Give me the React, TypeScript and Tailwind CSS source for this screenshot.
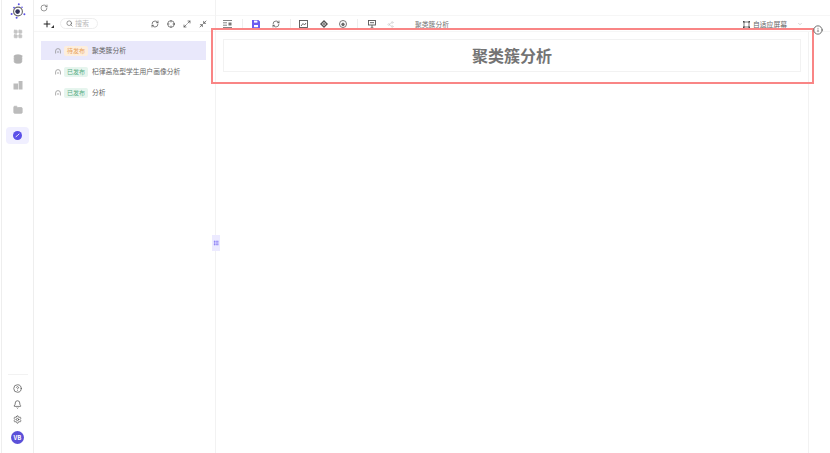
import { RotateCw, Plus, Search, Crosshair, Maximize2, Minimize2, ChevronDown, Info, CircleHelp, Bell, Settings, LayoutGrid, Database, Folder, RefreshCw, Share2, Grip } from 'lucide-react';

const F = "font-['Noto_Sans_CJK_SC','Noto_Sans',sans-serif]";

const reports = [
  { status: '待发布', name: '聚类簇分析', active: true },
  { status: '已发布', name: '杞律高危型学生用户画像分析', active: false },
  { status: '已发布', name: '分析', active: false },
];

const Logo = () => (
  <svg width="16" height="16" viewBox="0 0 16 16">
    <circle cx="8" cy="8.5" r="4.4" fill="none" stroke="#666" strokeWidth="1.1" />
    <circle cx="7.6" cy="8.6" r="2.3" fill="#33335c" />
    <circle cx="8.8" cy="1.2" r="1" fill="#5b50e8" />
    <circle cx="1.6" cy="11" r="1" fill="#5b50e8" />
    <circle cx="14.4" cy="11.2" r="1" fill="#5b50e8" />
    <circle cx="4" cy="4.6" r="0.9" fill="#5b50e8" />
    <circle cx="6.6" cy="14.8" r="1" fill="#5b50e8" />
    <circle cx="12" cy="4.2" r="0.8" fill="#5b50e8" />
  </svg>
);

const ChartIcon = () => (
  <svg width="10" height="10" viewBox="0 0 10 10" fill="#bcbcbc">
    <rect x="0.5" y="3.5" width="4.5" height="6" />
    <rect x="5.6" y="1" width="3.9" height="8.5" />
  </svg>
);

const ActiveIcon = () => (
  <svg width="9" height="9" viewBox="0 0 10 10">
    <circle cx="5" cy="5" r="5" fill="#5b50e8" />
    <path d="M3 6.5 L5 5 L7 3" fill="none" stroke="#fff" strokeWidth="1" />
  </svg>
);

const Arch = () => (
  <svg width="6" height="6" viewBox="0 0 6 6" fill="none" stroke="#888" strokeWidth="0.7">
    <path d="M0.6 5.5 V3 A2.4 2.4 0 0 1 5.4 3 V5.5" />
    <path d="M3 3 V5" />
  </svg>
);

const Sidebar = () => (
  <aside className="ml-px flex h-full w-[33px] shrink-0 flex-col items-center border-x border-[#eeeeee] pt-[3px] pb-[9px]">
    <Logo />
    <div className="mt-[7px] flex flex-col items-center gap-[10.5px]">
      <div className="flex h-[15px] items-center"><LayoutGrid size={10} fill="#c4c4c4" stroke="#c4c4c4" /></div>
      <div className="flex h-[15px] items-center"><Database size={10} fill="#b5b5b5" stroke="#b5b5b5" /></div>
      <div className="flex h-[15px] items-center"><ChartIcon /></div>
      <div className="flex h-[15px] items-center"><Folder size={10} fill="#bcbcbc" stroke="#bcbcbc" /></div>
    </div>
    <div className="mt-[9px] flex h-[17px] w-[23px] items-center justify-center rounded bg-[#f0efff]">
      <ActiveIcon />
    </div>
    <div className="mt-auto flex w-[20px] flex-col items-center border-t border-[#f2f2f2] pt-[9px]">
      <CircleHelp size={9} stroke="#555" />
      <Bell size={9} stroke="#555" className="mt-[7px]" />
      <Settings size={9} stroke="#555" className="mt-[6px]" />
      <div className="mt-[7px] flex h-[13px] w-[13px] items-center justify-center rounded-full bg-[#5b50d8] text-[6px] font-bold text-white">VB</div>
    </div>
  </aside>
);

const ReportList = () => (
  <section className="flex w-[182px] shrink-0 flex-col border-r border-[#f2f2f2]">
    <div className="flex h-[16px] items-center border-b border-[#f6f6f6] pl-[6px]">
      <RotateCw size={8} stroke="#666" />
    </div>
    <div className="flex h-[16px] items-center border-b border-[#f6f6f6] pl-[8px] pr-[8px]">
      <div className="relative">
        <Plus size={10} stroke="#222" strokeWidth={2.4} />
        <div className="absolute left-[9px] top-[6px] h-0 w-0 border-b-[3px] border-l-[3px] border-b-[#333] border-l-transparent" />
      </div>
      <div className="ml-[8px] flex h-[11px] w-[38px] items-center gap-[2px] rounded-full border border-[#eeeeee] pl-[5px]">
        <Search size={7} stroke="#555" />
        <span className="text-[7px] leading-none text-[#bbbbbb]">搜索</span>
      </div>
      <div className="ml-auto flex items-center gap-[8px]">
        <RefreshCw size={8} stroke="#444" />
        <Crosshair size={8} stroke="#444" />
        <Maximize2 size={8} stroke="#444" />
        <Minimize2 size={8} stroke="#444" />
      </div>
    </div>
    <ul className="mt-[9px] flex flex-col gap-[2px] pl-[7px] pr-[9px]">
      {reports.map((r) => (
        <li key={r.name} className={`flex h-[19px] items-center pl-[14px] ${r.active ? 'bg-[#e9e8fb]' : ''}`}>
          <Arch />
          <span className={`ml-[3px] flex h-[10px] w-[24px] items-center justify-center rounded-[2px] text-[6px] leading-none ${r.active ? 'bg-[#fdeedd] text-[#e8a35c]' : 'bg-[#e6f5ee] text-[#5aae85]'}`}>{r.status}</span>
          <span className="ml-[4px] text-[6.8px] leading-none text-[#666666]">{r.name}</span>
        </li>
      ))}
    </ul>
  </section>
);

const Divider = () => <div className="h-[10px] w-px bg-[#eeeeee]" />;

const IndentIcon = () => (
  <svg width="9" height="8" viewBox="0 0 9 8" fill="none" stroke="#777" strokeWidth="0.9">
    <path d="M0 0.5 H9 M0 7.5 H9 M0 2.8 H4 M0 5.2 H4" />
    <rect x="5.5" y="2.5" width="3" height="3" fill="#777" stroke="none" />
  </svg>
);

const SaveIcon = () => (
  <svg width="8" height="8" viewBox="0 0 8 8">
    <path d="M0 0 H6.4 L8 1.6 V8 H0 Z" fill="#6a5cf0" />
    <rect x="2" y="0.6" width="3.4" height="2" fill="#fff" />
    <rect x="2" y="5" width="4" height="2.2" fill="#fff" />
  </svg>
);

const PictureIcon = () => (
  <svg width="9" height="8" viewBox="0 0 9 8" fill="none" stroke="#555" strokeWidth="0.9">
    <rect x="0.5" y="0.5" width="8" height="7" />
    <path d="M2 6 L4 3.5 L5.5 5 L7 3" />
  </svg>
);

const ClusterIcon = () => (
  <svg width="8" height="8" viewBox="0 0 8 8" fill="#555">
    <path d="M4 0 L8 4 L4 8 L0 4 Z" />
    <path d="M4 2 L6 4 L4 6 L2 4 Z" fill="#fff" />
    <circle cx="4" cy="4" r="0.9" />
  </svg>
);

const DialIcon = () => (
  <svg width="8" height="8" viewBox="0 0 8 8" fill="none" stroke="#666" strokeWidth="0.9">
    <circle cx="4" cy="4" r="3.5" />
    <circle cx="4" cy="4.4" r="1.3" fill="#666" />
  </svg>
);

const BoardIcon = () => (
  <svg width="8" height="8" viewBox="0 0 8 8" fill="none" stroke="#555" strokeWidth="0.9">
    <rect x="0.5" y="0.5" width="7" height="4.5" />
    <path d="M4 5 V8 M2.5 8 H5.5" />
    <path d="M2 2.7 H6" />
  </svg>
);

const FitIcon = () => (
  <svg width="7" height="7" viewBox="0 0 7 7" fill="none" stroke="#444" strokeWidth="0.7">
    <rect x="1" y="1" width="5" height="5" />
    <rect x="0" y="0" width="1.5" height="1.5" fill="#444" stroke="none" />
    <rect x="5.5" y="0" width="1.5" height="1.5" fill="#444" stroke="none" />
    <rect x="0" y="5.5" width="1.5" height="1.5" fill="#444" stroke="none" />
    <rect x="5.5" y="5.5" width="1.5" height="1.5" fill="#444" stroke="none" />
  </svg>
);

const Toolbar = () => (
  <div className="flex h-[16px] items-center border-b border-[#f6f6f6] pt-px pl-[7px] pr-[27px]">
    <IndentIcon />
    <div className="ml-[10px]"><Divider /></div>
    <div className="ml-[9px]"><SaveIcon /></div>
    <RefreshCw size={8} stroke="#444" className="ml-[11.5px]" />
    <div className="ml-[10px]"><Divider /></div>
    <div className="ml-[8.5px]"><PictureIcon /></div>
    <div className="ml-[11.5px]"><ClusterIcon /></div>
    <div className="ml-[11.5px]"><DialIcon /></div>
    <div className="ml-[10px]"><Divider /></div>
    <div className="ml-[9.5px]"><BoardIcon /></div>
    <Share2 size={7} stroke="#cccccc" className="ml-[11.5px]" />
    <span className="ml-[21px] text-[6.8px] leading-none text-[#777777]">聚类簇分析</span>
    <div className="ml-auto"><FitIcon /></div>
    <span className="ml-[3px] text-[6.8px] leading-none text-[#666666]">自适应屏幕</span>
    <ChevronDown size={6} stroke="#aaaaaa" className="ml-[10px]" />
  </div>
);

export default function App() {
  return (
    <div className={`relative flex h-[453px] w-[830px] overflow-hidden bg-white ${F}`}>
      <Sidebar />
      <ReportList />
      <main className="relative flex min-w-0 flex-1 flex-col">
        <div className="h-[16px] border-b border-[#f6f6f6]" />
        <Toolbar />
        <div className="flex flex-1">
          <div className="flex-1 pl-[7px] pr-[7px] pt-[7px]">
            <div className="flex h-[33px] items-center justify-center border border-[#f2f2f2] pb-[2px] text-[16px] leading-none font-bold text-[#747474]">聚类簇分析</div>
          </div>
          <div className="w-[22px] border-l border-[#f2f2f2]" />
        </div>
        <div className="absolute left-[-4px] top-[235px] flex h-[16px] w-[8px] items-center justify-center bg-[#eceaff]">
          <Grip size={6} stroke="#6a5cf0" />
        </div>
      </main>
      <div className="pointer-events-none absolute left-[211px] top-[28px] h-[56px] w-[603px] border-2 border-[#f98585]" />
      <Info size={10} stroke="#555" className="absolute left-[813px] top-[25px]" />
    </div>
  );
}
